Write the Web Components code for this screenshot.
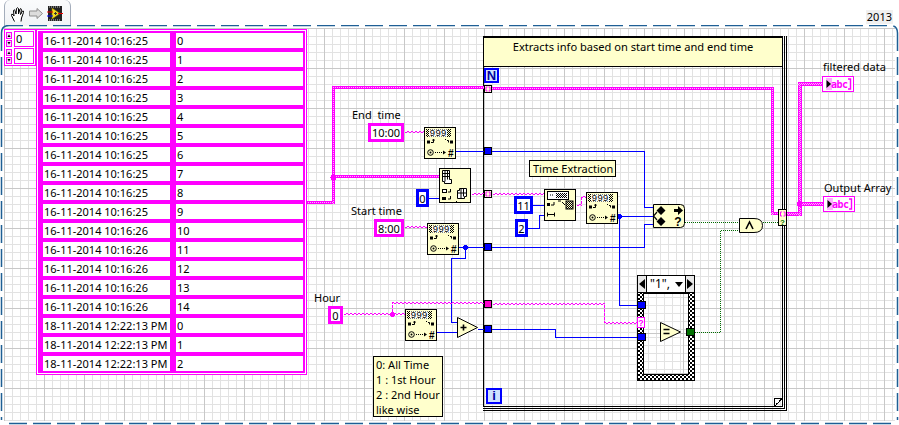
<!DOCTYPE html>
<html>
<head>
<meta charset="utf-8">
<title>Block diagram</title>
<style>
  html, body { margin: 0; background: #fff; }
  body { font: 11px "Noto Sans", sans-serif; color: #000; width: 899px; height: 425px; overflow: hidden; }
</style>
</head>
<body>
<lv-toolbar></lv-toolbar>
<lv-diagram>
  <lv-wires></lv-wires>

  <lv-index x="4" y="29"></lv-index>
  <lv-table x="36" y="29"></lv-table>

  <lv-loop x="483" y="36" w="304" h="375">Extracts info based on start time and end time</lv-loop>
  <lv-case x="637" y="275"></lv-case>

  <lv-label x="352" y="107">End&nbsp; time</lv-label>
  <lv-const x="368" y="123" w="36" h="19" kind="pink">10:00</lv-const>
  <lv-label x="351" y="203">Start time</lv-label>
  <lv-const x="374" y="219" w="30" h="18" kind="pink">8:00</lv-const>
  <lv-label x="314" y="290">Hour</lv-label>
  <lv-const x="328" y="306" w="15" h="18" kind="pink">0</lv-const>
  <lv-const x="416" y="189" w="13" h="18" kind="blue">0</lv-const>
  <lv-const x="514" y="196" w="19" h="18" kind="blue">11</lv-const>
  <lv-const x="515" y="219" w="13" h="18" kind="blue">2</lv-const>

  <lv-node x="424" y="127" kind="decimal"></lv-node>
  <lv-node x="439" y="168" kind="index"></lv-node>
  <lv-node x="427" y="223" kind="decimal"></lv-node>
  <lv-node x="405" y="309" kind="decimal"></lv-node>
  <lv-node x="544" y="189" kind="subset"></lv-node>
  <lv-node x="586" y="192" kind="decimal"></lv-node>
  <lv-node x="653" y="204" kind="select"></lv-node>
  <lv-node x="739" y="218" kind="and"></lv-node>
  <lv-node x="660" y="322" kind="equal"></lv-node>
  <lv-node x="457" y="317" kind="add"></lv-node>

  <lv-tunnel x="484" y="85" kind="array"></lv-tunnel>
  <lv-tunnel x="484" y="147" kind="blue"></lv-tunnel>
  <lv-tunnel x="484" y="190" kind="array"></lv-tunnel>
  <lv-tunnel x="484" y="243" kind="blue"></lv-tunnel>
  <lv-tunnel x="484" y="300" kind="pink"></lv-tunnel>
  <lv-tunnel x="484" y="325" kind="blue"></lv-tunnel>
  <lv-tunnel x="637" y="301" kind="bluewide"></lv-tunnel>
  <lv-tunnel x="637" y="317" kind="selector"></lv-tunnel>
  <lv-tunnel x="637" y="333" kind="bluewide"></lv-tunnel>
  <lv-tunnel x="686" y="328" kind="green"></lv-tunnel>
  <lv-tunnel x="778" y="209" kind="output"></lv-tunnel>

  <lv-note x="529" y="160" w="87" h="17">Time Extraction</lv-note>
  <lv-note x="373" y="356" w="70" h="61" multi>0: All Time<br>1 : 1st Hour<br>2 : 2nd Hour<br>like wise</lv-note>

  <lv-label x="823" y="59">filtered data</lv-label>
  <lv-indicator x="822" y="76"></lv-indicator>
  <lv-label x="824" y="180">Output Array</lv-label>
  <lv-indicator x="823" y="196"></lv-indicator>
</lv-diagram>

<script>
// top of the diagram sits under the 25px toolbar, coordinates in the markup are page coordinates
const DIAGRAM_TOP = 25;

class LvElement extends HTMLElement {
    constructor(markup) {
        super();
        this.attachShadow({ mode: 'open' }).innerHTML = markup;
    }
    connectedCallback() {
        const attr = (name) => this.getAttribute(name);
        if (attr('x') !== null) this.style.left = attr('x') + 'px';
        if (attr('y') !== null) this.style.top = (attr('y') - DIAGRAM_TOP) + 'px';
        if (attr('w') !== null) this.style.width = attr('w') + 'px';
        if (attr('h') !== null) this.style.height = attr('h') + 'px';
    }
}

class LvToolbar extends LvElement {
    constructor() {
        super(`
            <style>
                :host { display: flex; justify-content: space-between; height: 25px; padding: 0 6px 0 4px; box-sizing: border-box; }
                .tab {
                    width: 67px; height: 26px; box-sizing: border-box;
                    border: 1px solid #a4adbb; border-bottom: 0; border-top: 0;
                    border-top-left-radius: 6px; border-top-right-radius: 6px;
                    background: linear-gradient(#fafbfc, #f1f3f6);
                    display: flex; align-items: center; gap: 3px; padding: 1px 0 0 5px;
                }
                .year { align-self: flex-end; line-height: 14px; height: 14px; margin-bottom: 1px; padding: 0 1px; background: #f0f0f0; }
                svg { display: block; flex: none; }
            </style>
            <div class="tab">
                <svg width="16" height="16" viewBox="0 0 16 16" fill="#fff" stroke="#000" stroke-width="1">
                    <path d="M4.5 15.5 L1.5 9.5 Q1 7.5 3 8.5 L4 10 L3.5 4.5 Q4 3 5 4.5 L6 8 L6.5 2.5 Q7.5 1 8.5 2.5 L8.5 8 L10 3 Q11 2 11.5 3.5 L10.5 8.5 L12.5 5 Q14 4.5 13.5 6.5 L11.5 12 L11 15.5"/>
                </svg>
                <svg width="14" height="11" viewBox="0 0 14 11">
                    <path d="M.5 3 H8 V.5 L13.5 5.5 L8 10.5 V8 H.5 Z" fill="#dcdcdc" stroke="#8d8d8d"/>
                </svg>
                <svg width="16" height="16" viewBox="0 0 16 16" style="margin-left:1px">
                    <rect x="1" y="0" width="14" height="15" fill="#222"/>
                    <path d="M2 1h1M4 1h1M6 1h1M8 1h1M10 1h1M12 1h1M2 14h1M4 14h1M6 14h1M8 14h1M10 14h1M12 14h1" stroke="#ccc"/>
                    <path d="M5 2 L13 7.5 L5 13 Z" fill="#f5dc1e" stroke="#7a7000" stroke-width=".6"/>
                    <path d="M7 7.5h3M8.5 6v3" stroke="#333"/>
                    <path d="M0 6h6" stroke="#e00" /><path d="M0 10h6" stroke="#00f"/><path d="M11 7.5h5" stroke="#e00"/>
                </svg>
            </div>
            <div class="year">2013</div>`);
    }
}

class LvDiagram extends LvElement {
    constructor() {
        super(`
            <style>
                :host {
                    display: block; position: relative; width: 899px; height: 400px; overflow: hidden;
                }
                .grid {
                    position: absolute; left: 4px; top: 3px; width: 891px; height: 393px;
                    background-color: #fff;
                    background-image:
                        linear-gradient(to right, #c8c8c8 1px, transparent 1px),
                        linear-gradient(to bottom, #c8c8c8 1px, transparent 1px),
                        linear-gradient(to right, #e2e2e2 1px, transparent 1px),
                        linear-gradient(to bottom, #e2e2e2 1px, transparent 1px);
                    background-size: 40px 40px, 40px 40px, 8px 8px, 8px 8px;
                }
                svg { position: absolute; left: 0; top: 0; }
            </style>
            <div class="grid"></div>
            <svg width="899" height="400" viewBox="0 25 899 400" fill="none" stroke="#1f5f95" stroke-width="1.5">
                <path d="M9 25.5 H890 Q897.5 25.5 897.5 33" stroke-dasharray="18 6" stroke-dashoffset="4"/>
                <path d="M1.5 33 Q1.5 25.5 9 25.5"/>
                <path d="M1.5 33 V420" stroke-dasharray="18 6"/>
                <path d="M897.5 33 V420" stroke-dasharray="18 6"/>
                <path d="M9 423.5 H895" stroke-dasharray="18 6"/>
            </svg>
            <slot></slot>`);
    }
}

const BLUE_WIRES = [
    'M456 151.5H484', 'M492 151.5H644.5V207.5H653',
    'M429 198.5H439',
    'M459 247.5H484', 'M492 247.5H644.5V224.5H653',
    'M465.5 247.5V258.5H451.5V322.5H457',
    'M437 332.5H457',
    'M478 329.5H484', 'M492 329.5H555.5V337.5H638',
    'M533 205.5H544', 'M528 228.5H539.5V215.5H544',
    'M618 216.5H653', 'M619.5 216.5V305.5H638',
    'M646 305.5H652.5V327.5H660', 'M646 337.5H660'
];
const THIN_PINK = [
    [[404, 132], [424, 132]],
    [[404, 227], [427, 227]],
    [[471, 194], [484, 194]],
    [[492, 194], [544, 194]],
    [[576, 205], [581, 205], [581, 197], [586, 197]],
    [[343, 314], [405, 314]],
    [[392, 314], [392, 303], [484, 303]],
    [[492, 304], [604, 304], [604, 323], [638, 323]]
];
// size is the wire width; the dotted core runs down the middle of it
const THICK_PINK = [
    { size: 3, pts: [[307, 202], [332, 202], [332, 87], [484, 87]] },
    { size: 3, pts: [[332, 176], [439, 176]] },
    { size: 3, pts: [[492, 88], [771, 88], [771, 213], [778, 213]] },
    { size: 4, pts: [[787, 213], [798, 213], [798, 83], [822, 83]] },
    { size: 4, pts: [[798, 203], [823, 203]] }
];
const GREEN_WIRES = [
    'M685 222.5H739', 'M763 222.5H778',
    'M681 332.5H686', 'M695 332.5H720.5V230.5H739'
];
const toPath = (points) => points.map((p, i) => (i ? 'L' : 'M') + p[0] + ' ' + p[1]).join('');

function thickWire({ size, pts }) {
    const core = size - 2;
    let out = '';
    let dots = '';
    for (let i = 1; i < pts.length; i++) {
        const [x1, y1] = pts[i - 1];
        const [x2, y2] = pts[i];
        const left = Math.min(x1, x2);
        const top = Math.min(y1, y2);
        const w = Math.abs(x2 - x1);
        const h = Math.abs(y2 - y1);
        if (h === 0) {
            out += `<rect x="${left}" y="${top - 1}" width="${w + size}" height="${size}" fill="#ff00ff"/>`;
            dots += `<rect x="${left}" y="${top}" width="${w + size - 1}" height="${core}" fill="url(#dots)"/>`;
        } else {
            out += `<rect x="${left}" y="${top}" width="${size}" height="${h + size - 1}" fill="#ff00ff"/>`;
            dots += `<rect x="${left + 1}" y="${top + 1}" width="${core}" height="${h + size - 2}" fill="url(#dots)"/>`;
        }
    }
    return out + dots;
}

class LvWires extends LvElement {
    constructor() {
        const blue = BLUE_WIRES.map((d) => `<path d="${d}" stroke="#0000ff"/>`).join('');
        const green = GREEN_WIRES.map((d) => `<path d="${d}" stroke="#006b00" stroke-dasharray="1 1"/>`).join('');
        const thin = THIN_PINK.map((pts) => {
            const d = toPath(pts.map((p) => [p[0] + .5, p[1] + .5]));
            const d2 = toPath(pts.map((p) => [p[0] + .5, p[1] - .5]));
            return `<path d="${d}" stroke="#ff00ff" stroke-dasharray="2 2"/>
                    <path d="${d2}" stroke="#ff00ff" stroke-dasharray="2 2" stroke-dashoffset="2"/>`;
        }).join('');
        super(`
            <style>
                :host { position: absolute; left: 0; top: 0; z-index: 2; pointer-events: none; }
                svg { display: block; }
            </style>
            <svg width="899" height="400" viewBox="0 25 899 400" fill="none" shape-rendering="crispEdges">
                <defs>
                    <pattern id="dots" width="2" height="2" patternUnits="userSpaceOnUse">
                        <rect width="1" height="1" fill="#ffb4ff"/><rect x="1" y="1" width="1" height="1" fill="#ffb4ff"/>
                    </pattern>
                </defs>
                ${blue}${green}${thin}${THICK_PINK.map(thickWire).join('')}
                <circle cx="619.5" cy="216.5" r="2.5" fill="#0000ff"/>
                <circle cx="465.5" cy="247.5" r="2.5" fill="#0000ff"/>
                <circle cx="333.5" cy="177.5" r="3" fill="#ff00ff"/>
                <circle cx="392.5" cy="314.5" r="2.5" fill="#ff00ff"/>
                <circle cx="799.5" cy="204" r="3" fill="#ff00ff"/>
            </svg>`);
    }
}

class LvIndex extends LvElement {
    constructor() {
        const cell = `
            <div class="row">
                <div class="spin">
                    <svg width="6" height="15" viewBox="0 0 6 15">
                        <rect x=".5" y=".5" width="5" height="6" fill="#f6d8f6" stroke="#ff00ff"/>
                        <path d="M1.5 5 L3 2.5 L4.5 5Z" fill="#000"/>
                        <rect x=".5" y="8.5" width="5" height="6" fill="#f6d8f6" stroke="#ff00ff"/>
                        <path d="M1.5 10 L3 12.5 L4.5 10Z" fill="#000"/>
                    </svg>
                </div>
                <div class="val">0</div>
            </div>`;
        super(`
            <style>
                :host { position: absolute; z-index: 3; box-sizing: border-box; width: 32px; height: 37px; border: 1px solid #ff00ff; background: #fff; display: flex; flex-direction: column; gap: 1px; padding: 1px; }
                .row { display: flex; gap: 1px; height: 16px; }
                .spin { width: 7px; padding-top: 1px; }
                svg { display: block; }
                .val { flex: 1; border: 1px solid #ff00ff; background: #fff; line-height: 14px; padding-left: 1px; }
            </style>
            ${cell}${cell}`);
    }
}

class LvTable extends LvElement {
    constructor() {
        const rows = [];
        for (let i = 0; i < 15; i++) {
            rows.push(['16-11-2014 10:16:' + (i < 10 ? '25' : '26'), i]);
        }
        for (let i = 0; i < 3; i++) {
            rows.push(['18-11-2014 12:22:13 PM', i]);
        }
        super(`
            <style>
                :host { position: absolute; z-index: 3; width: 271px; box-sizing: border-box; border: 1px solid #ff00ff; padding: 1px; background: #fff; }
                .cells {
                    display: grid; grid-template-columns: 127px 127px; column-gap: 6px; row-gap: 4px;
                    grid-auto-rows: 15px; padding: 2px 2px 2px 5px; background: #ff00ff;
                }
                .cells div { background: #fff; line-height: 15px; padding-left: 1px; white-space: nowrap; overflow: hidden; }
            </style>
            <div class="cells">
                ${rows.map((r) => `<div>${r[0]}</div><div>${r[1]}</div>`).join('')}
            </div>`);
    }
}

class LvLoop extends LvElement {
    constructor() {
        super(`
            <style>
                :host { position: absolute; z-index: 1; display: block; box-sizing: border-box; }
                .title {
                    position: relative; z-index: 1; height: 31px; width: 299px; box-sizing: border-box;
                    border-top: 2px solid #000; border-bottom: 1px solid #000; border-left: 1px solid #000;
                    background: #ffffcc; text-align: center; line-height: 17px; font-size: 11.1px;
                }
                svg { position: absolute; left: 0; top: 0; }
                .term {
                    position: absolute; left: 1px; box-sizing: border-box; border: 2px solid #0000ff; background: #fff;
                    font: bold 13px "Liberation Sans", sans-serif; color: #0000a0; text-align: center;
                }
                .n { top: 32px; width: 15px; height: 15px; line-height: 11px; background: #cfe2ff; }
                .i { top: 352px; left: 3px; width: 16px; height: 16px; line-height: 12px; background: #cfe2ff; }
            </style>
            <svg width="304" height="375" viewBox="483 36 304 375" fill="none" stroke="#000" shape-rendering="crispEdges">
                <path d="M483.5 36V406.5H782.5V36"/>
                <path d="M784.5 36V408.5H483"/>
                <path d="M786.5 36V410.5H483"/>
                <path d="M774.5 398.5H782V399L775 406H774.5Z" fill="#fff"/>
                <path d="M775 405.5L782 398.5" stroke-dasharray="1 1"/>
            </svg>
            <div class="title"><slot></slot></div>
            <div class="term n">N</div>
            <div class="term i">i</div>`);
    }
}

class LvCase extends LvElement {
    constructor() {
        super(`
            <style>
                :host {
                    position: absolute; z-index: 2; width: 58px; height: 106px; box-sizing: border-box;
                    border: 1px solid #000; display: flex; flex-direction: column;
                    background-color: #fff;
                    background-image: conic-gradient(#000 25%, #fff 0 50%, #000 0 75%, #fff 0);
                    background-size: 4px 4px;
                }
                .head { display: flex; height: 16px; background: #fff; border-bottom: 1px solid #000; flex: none; }
                .arrow { width: 8px; display: flex; align-items: center; justify-content: center; background: #e8e8e8; flex: none; }
                .arrow.left { border-right: 1px solid #000; }
                .arrow.right { border-left: 1px solid #000; }
                .sel { flex: 1; display: flex; align-items: center; padding-left: 3px; gap: 5px; line-height: 14px; white-space: pre; font-size: 12px; }
                .inner { margin: 0 5px 5px 5px; flex: 1; border: 1px solid #000; background-color: #fff;
                    background-image:
                        linear-gradient(to right, #c8c8c8 1px, transparent 1px),
                        linear-gradient(to bottom, #c8c8c8 1px, transparent 1px),
                        linear-gradient(to right, #e2e2e2 1px, transparent 1px),
                        linear-gradient(to bottom, #e2e2e2 1px, transparent 1px);
                    background-size: 40px 40px, 40px 40px, 8px 8px, 8px 8px;
                    background-position: -1px -1px, 2px -1px, 4px 3px, 4px 3px;
                }
                svg { display: block; }
            </style>
            <div class="head">
                <div class="arrow left"><svg width="6" height="10"><path d="M6 0V10L0 5Z"/></svg></div>
                <div class="sel">"1",<svg width="8" height="5"><path d="M0 0H8L4 5Z"/></svg></div>
                <div class="arrow right"><svg width="6" height="10"><path d="M0 0V10L6 5Z"/></svg></div>
            </div>
            <div class="inner"></div>`);
    }
}

class LvLabel extends LvElement {
    constructor() {
        super(`
            <style>
                :host { position: absolute; z-index: 3; line-height: 16px; white-space: nowrap; }
            </style>
            <slot></slot>`);
    }
}

class LvConst extends LvElement {
    constructor() {
        super(`
            <style>
                :host {
                    position: absolute; z-index: 3; box-sizing: border-box; border: 3px solid #ff00ff;
                    background: #fff; display: flex; align-items: center; justify-content: center;
                    line-height: 13px; white-space: nowrap;
                }
                :host([kind="blue"]) { border-color: #0000ff; }
            </style>
            <slot></slot>`);
    }
}

class LvNote extends LvElement {
    constructor() {
        super(`
            <style>
                :host {
                    position: absolute; z-index: 3; box-sizing: border-box; border: 1px solid #000;
                    background: #ffffcc; padding: 0 3px; line-height: 15px; white-space: nowrap; overflow: hidden;
                    text-align: center;
                }
                :host([multi]) { padding: 0 2px; text-align: left; }
            </style>
            <slot></slot>`);
    }
}

class LvTunnel extends LvElement {
    constructor() {
        super(`
            <style>
                :host { position: absolute; z-index: 4; line-height: 0; }
                svg { display: block; }
            </style>
            <span id="art"></span>`);
    }
    connectedCallback() {
        super.connectedCallback();
        const art = {
            blue: `<svg width="8" height="8"><rect x=".5" y=".5" width="7" height="7" fill="#0000ff" stroke="#000"/></svg>`,
            bluewide: `<svg width="9" height="8"><rect x=".5" y=".5" width="8" height="7" fill="#0000ff" stroke="#000"/></svg>`,
            pink: `<svg width="8" height="8"><rect x=".5" y=".5" width="7" height="7" fill="#ff00cc" stroke="#000"/></svg>`,
            green: `<svg width="9" height="8"><rect x=".5" y=".5" width="8" height="7" fill="#007000" stroke="#000"/></svg>`,
            array: `<svg width="8" height="8"><rect x=".5" y=".5" width="7" height="7" fill="#ffffdc" stroke="#000"/><path d="M3.5 2H2V6H3.500M4.500 2H6V6H4.500" fill="none" stroke="#ff00ff"/></svg>`,
            selector: `<svg width="8" height="11"><rect x=".5" y=".5" width="7" height="10" fill="#fff" stroke="#ff00ff"/><text x="4" y="9" text-anchor="middle" font-family="Liberation Sans" font-weight="bold" font-size="9" fill="#ff00ff">?</text></svg>`,
            output: `<svg width="9" height="17"><rect x=".5" y=".5" width="8" height="16" fill="#ffffcc" stroke="#000"/><path d="M4 3H2.500V7H4M5.500 3H7V7H5.500" fill="none" stroke="#ff00ff"/><text x="4.500" y="15.500" text-anchor="middle" font-family="Liberation Sans" font-weight="bold" font-size="8" fill="#007000">?</text></svg>`
        };
        this.shadowRoot.getElementById('art').innerHTML = art[this.getAttribute('kind')];
    }
}

class LvIndicator extends LvElement {
    constructor() {
        super(`
            <style>
                :host {
                    position: absolute; z-index: 3; width: 32px; height: 16px; box-sizing: border-box;
                    border: 1px solid #ff00ff; background: #fff;
                }
                svg { display: block; }
                text { font: bold 10px "DejaVu Sans Mono", monospace; fill: #ff00ff; }
            </style>
            <svg width="30" height="14" viewBox="0 0 30 14">
                <rect x="3" y="1" width="6" height="12" fill="#ffb0ff"/>
                <path d="M3.500 3 L8 7 L3.500 11Z" fill="#000"/>
                <text x="8" y="10.500" textLength="17">abc</text>
                <path d="M25 2H27.500V12H25" fill="none" stroke="#ff00ff" stroke-width="1.4"/>
            </svg>`);
    }
}

const ROW_DECIMAL = `
    <path d="M3 13.5h3v3H3zM26 13.5h3v3h-3z"/>
    <path d="M7 15.5h2.5v-3M8.5 13.5l1-1.5 1 1.5M21 12.5h1M23 13.5h1.5v2" fill="none" stroke="#000"/>
    <circle cx="6.5" cy="25.5" r="2.8" fill="none" stroke="#000"/><circle cx="6.5" cy="25.5" r="1"/>
    <path d="M11 25.5h10" stroke="#000" stroke-dasharray="1 1"/><path d="M19 23.5l3 2-3 2z"/>`;
const NODE_ART = {
    decimal: [32, 32, `
        <rect x=".5" y=".5" width="31" height="31" fill="#ffffcc" stroke="#000"/>
        <rect x="2" y="2" width="25" height="8" fill="url(#hatch)"/>
        <rect x="5" y="2.5" width="18" height="7" fill="#fff"/>
        <text x="14" y="9" text-anchor="middle" font-family="Liberation Mono" font-size="9.5">999</text>
        ${ROW_DECIMAL}
        <text x="24" y="30" font-family="Liberation Sans" font-weight="bold" font-size="10">#</text>`],
    index: [32, 35, `
        <rect x=".5" y=".5" width="31" height="34" fill="#ffffcc" stroke="#000"/>
        <path d="M3.500 2.500h7v9h2v4h-7v-2h-2zM3.500 5.500h7M3.500 8.500h7M6 2.500v11M8.500 2.500v9" fill="#fff" stroke="#000"/>
        <path d="M20.500 20.500h7v8h-2v2h-7v-8h2zM18.500 25h9M22 20.500v10M24.500 20.500v8" fill="#fff" stroke="#000"/>
        <rect x="3.500" y="21.500" width="4" height="3" fill="#fff" stroke="#000"/><path d="M3 29h4v3H3z"/>
        <path d="M9 24h2.500v-3M9 31h2.500v-3" fill="none" stroke="#000"/><path d="M17 33h1v1h-1z"/>`],
    subset: [32, 32, `
        <rect x=".5" y=".5" width="31" height="31" fill="#ffffcc" stroke="#000"/>
        <rect x="3.500" y="2.500" width="21" height="8" fill="#fff" stroke="#000"/>
        <rect x="12" y="4" width="11" height="5" fill="url(#hatch)"/><path d="M6 6h1M8 6h1" stroke="#000"/>
        <rect x="22" y="12" width="7" height="8" fill="url(#hatch)" stroke="#000"/>
        <path d="M3 14h3v3H3z"/>
        <path d="M7 16h3v-3M14 12h3M18 13l3 3" fill="none" stroke="#000"/>
        <path d="M3.500 23.500v4M10.500 23.500v4M4 25.500h6" stroke="#000" fill="none"/><path d="M5 25.500h1M8 25.500h1" stroke="#000"/>`],
    select: [32, 24, `
        <path d="M.5.5H27.500Q31.500.5 31.500 4.500V19.500Q31.500 23.500 27.500 23.500H.5Z" fill="#ffffcc" stroke="#000"/>
        <path d="M8 2L12.500 6.500L8 11L3.500 6.500ZM8 13L12.500 17.500L8 22L3.500 17.500Z"/>
        <path d="M4 8L.5 12L4 16" fill="none" stroke="#000" stroke-width="1.2"/>
        <path d="M21 5H25V2L30 6.500L25 11V8H21Z"/>
        <text x="25" y="22" text-anchor="middle" font-family="Liberation Sans" font-weight="bold" font-size="12">?</text>`],
    and: [24, 15, `
        <path d="M.5.500H15Q23.500.500 23.500 7.500Q23.500 14.500 15 14.500H.5Z" fill="#ffffcc" stroke="#000"/>
        <path d="M7 11L10.500 4L14 11" fill="none" stroke="#000" stroke-width="1.6"/>`],
    equal: [21, 20, `
        <path d="M.5.500L20.500 10L.5 19.500Z" fill="#ffffcc" stroke="#000"/>
        <path d="M3.500 7.500h6M3.500 11.500h6" stroke="#000" stroke-width="1.6"/>`],
    add: [21, 21, `
        <path d="M.5.500L20.500 10.500L.5 20.500Z" fill="#ffffcc" stroke="#000"/>
        <path d="M3.500 10.500h6M6.500 7.500v6" stroke="#000" stroke-width="1.6"/>`]
};

class LvNode extends LvElement {
    constructor() {
        super(`
            <style>
                :host { position: absolute; z-index: 3; line-height: 0; }
                svg { display: block; }
            </style>
            <span id="art"></span>`);
    }
    connectedCallback() {
        super.connectedCallback();
        const [w, h, body] = NODE_ART[this.getAttribute('kind')];
        this.shadowRoot.getElementById('art').innerHTML = `
            <svg width="${w}" height="${h}" viewBox="0 0 ${w} ${h}">
                <defs>
                    <pattern id="hatch" width="2" height="2" patternUnits="userSpaceOnUse">
                        <rect width="1" height="1"/><rect x="1" y="1" width="1" height="1"/>
                    </pattern>
                </defs>
                ${body}
            </svg>`;
    }
}

customElements.define('lv-toolbar', LvToolbar);
customElements.define('lv-diagram', LvDiagram);
customElements.define('lv-wires', LvWires);
customElements.define('lv-index', LvIndex);
customElements.define('lv-table', LvTable);
customElements.define('lv-loop', LvLoop);
customElements.define('lv-case', LvCase);
customElements.define('lv-label', LvLabel);
customElements.define('lv-const', LvConst);
customElements.define('lv-note', LvNote);
customElements.define('lv-tunnel', LvTunnel);
customElements.define('lv-indicator', LvIndicator);
customElements.define('lv-node', LvNode);
</script>
</body>
</html>
